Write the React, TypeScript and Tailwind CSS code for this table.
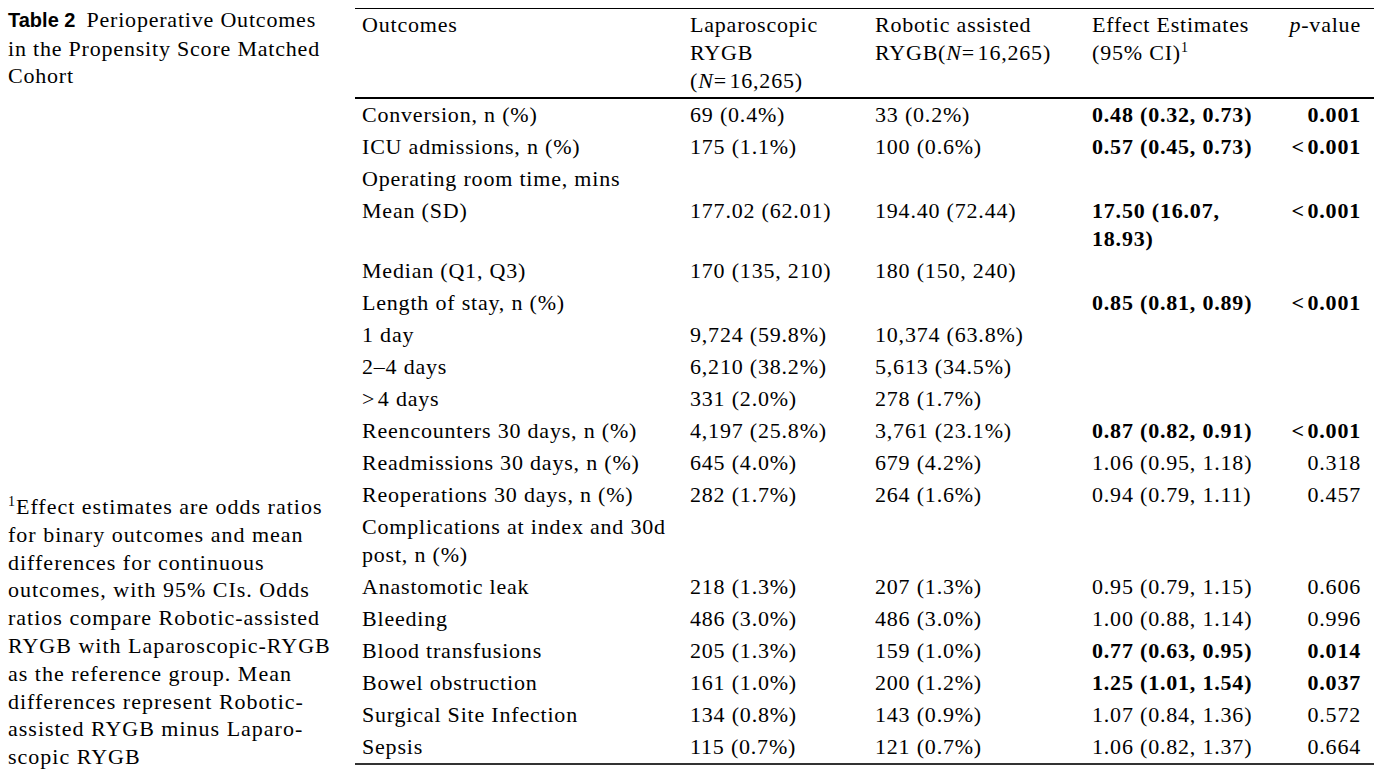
import React from 'react';

type Row = {
    label: React.ReactNode;
    lap?: string;
    rob?: string;
    est?: React.ReactNode;
    p?: string;
    bold?: boolean;
};

const LT = '<\u200a0.001';

const rows: Row[] = [
    { label: 'Conversion, n (%)', lap: '69 (0.4%)', rob: '33 (0.2%)', est: '0.48 (0.32, 0.73)', p: '0.001', bold: true },
    { label: 'ICU admissions, n (%)', lap: '175 (1.1%)', rob: '100 (0.6%)', est: '0.57 (0.45, 0.73)', p: LT, bold: true },
    { label: 'Operating room time, mins' },
    { label: 'Mean (SD)', lap: '177.02 (62.01)', rob: '194.40 (72.44)', est: <>17.50 (16.07,<br />18.93)</>, p: LT, bold: true },
    { label: 'Median (Q1, Q3)', lap: '170 (135, 210)', rob: '180 (150, 240)' },
    { label: 'Length of stay, n (%)', est: '0.85 (0.81, 0.89)', p: LT, bold: true },
    { label: '1 day', lap: '9,724 (59.8%)', rob: '10,374 (63.8%)' },
    { label: '2–4 days', lap: '6,210 (38.2%)', rob: '5,613 (34.5%)' },
    { label: '>\u200a4 days', lap: '331 (2.0%)', rob: '278 (1.7%)' },
    { label: 'Reencounters 30 days, n (%)', lap: '4,197 (25.8%)', rob: '3,761 (23.1%)', est: '0.87 (0.82, 0.91)', p: LT, bold: true },
    { label: 'Readmissions 30 days, n (%)', lap: '645 (4.0%)', rob: '679 (4.2%)', est: '1.06 (0.95, 1.18)', p: '0.318' },
    { label: 'Reoperations 30 days, n (%)', lap: '282 (1.7%)', rob: '264 (1.6%)', est: '0.94 (0.79, 1.11)', p: '0.457' },
    { label: <>Complications at index and 30d<br />post, n (%)</> },
    { label: 'Anastomotic leak', lap: '218 (1.3%)', rob: '207 (1.3%)', est: '0.95 (0.79, 1.15)', p: '0.606' },
    { label: 'Bleeding', lap: '486 (3.0%)', rob: '486 (3.0%)', est: '1.00 (0.88, 1.14)', p: '0.996' },
    { label: 'Blood transfusions', lap: '205 (1.3%)', rob: '159 (1.0%)', est: '0.77 (0.63, 0.95)', p: '0.014', bold: true },
    { label: 'Bowel obstruction', lap: '161 (1.0%)', rob: '200 (1.2%)', est: '1.25 (1.01, 1.54)', p: '0.037', bold: true },
    { label: 'Surgical Site Infection', lap: '134 (0.8%)', rob: '143 (0.9%)', est: '1.07 (0.84, 1.36)', p: '0.572' },
    { label: 'Sepsis', lap: '115 (0.7%)', rob: '121 (0.7%)', est: '1.06 (0.82, 1.37)', p: '0.664' },
];

const footnote = [
    <><sup className="text-[14px] -top-[8px]">1</sup>Effect estimates are odds ratios</>,
    'for binary outcomes and mean',
    'differences for continuous',
    'outcomes, with 95% CIs. Odds',
    'ratios compare Robotic-assisted',
    'RYGB with Laparoscopic-RYGB',
    'as the reference group. Mean',
    'differences represent Robotic-',
    'assisted RYGB minus Laparo-',
    'scopic RYGB',
];

const App = () => {
    return (
        <div className="h-[778px] w-[1374px] bg-white text-black flex font-['Liberation_Serif','Times_New_Roman',serif] text-[22px] leading-[28px] tracking-[0.8px] overflow-hidden">
            {/* Caption column */}
            <div className="w-[355px] shrink-0 pl-[8px] pt-[6px] pb-[7px] flex flex-col justify-between leading-[27.5px]">
                <div>
                    <div>
                        <span className="font-['Liberation_Sans',Arial,sans-serif] font-bold text-[20px] tracking-normal">Table 2</span>
                        <span className="ml-[11px]">Perioperative Outcomes</span>
                    </div>
                    <div>in the Propensity Score Matched</div>
                    <div>Cohort</div>
                </div>
                <div className="leading-[27.8px] tracking-[1px]">
                    {footnote.map((line, i) => (
                        <div key={i}>{line}</div>
                    ))}
                </div>
            </div>

            {/* Table */}
            <div className="pt-[8px] w-[1019px] shrink-0">
                <table className="w-[1019px] table-fixed border-collapse">
                    <colgroup>
                        <col className="w-[328px]" />
                        <col className="w-[185px]" />
                        <col className="w-[217px]" />
                        <col className="w-[190px]" />
                        <col className="w-[99px]" />
                    </colgroup>
                    <thead>
                        <tr className="border-t border-black border-b-2 align-top">
                            <th className="font-normal text-left px-[7px] pt-[2px] pb-[2px]">Outcomes</th>
                            <th className="font-normal text-left px-[7px] pt-[2px] pb-[2px]">
                                Laparoscopic<br />RYGB<br />(<i>N</i>=&#8202;16,265)
                            </th>
                            <th className="font-normal text-left px-[7px] pt-[2px] pb-[2px]">
                                Robotic assisted<br />RYGB(<i>N</i>=&#8202;16,265)
                            </th>
                            <th className="font-normal text-left px-[7px] pt-[2px] pb-[2px]">
                                Effect Estimates<br />(95% CI)<sup className="text-[14px] -top-[8px]">1</sup>
                            </th>
                            <th className="font-normal text-right pl-[7px] pr-[13px] pt-[2px] pb-[2px]">
                                <i>p</i>-value
                            </th>
                        </tr>
                    </thead>
                    <tbody className="border-b-2 border-[#333]">
                        {rows.map((r, i) => (
                            <tr key={i} className="align-top">
                                <td className="px-[7px] py-[2px]">{r.label}</td>
                                <td className="px-[7px] py-[2px]">{r.lap}</td>
                                <td className="px-[7px] py-[2px]">{r.rob}</td>
                                <td className={`px-[7px] py-[2px] ${r.bold ? 'font-bold' : ''}`}>{r.est}</td>
                                <td className={`pl-[7px] pr-[13px] py-[2px] text-right ${r.bold ? 'font-bold' : ''}`}>{r.p}</td>
                            </tr>
                        ))}
                    </tbody>
                </table>
            </div>
        </div>
    );
};

export default App;
